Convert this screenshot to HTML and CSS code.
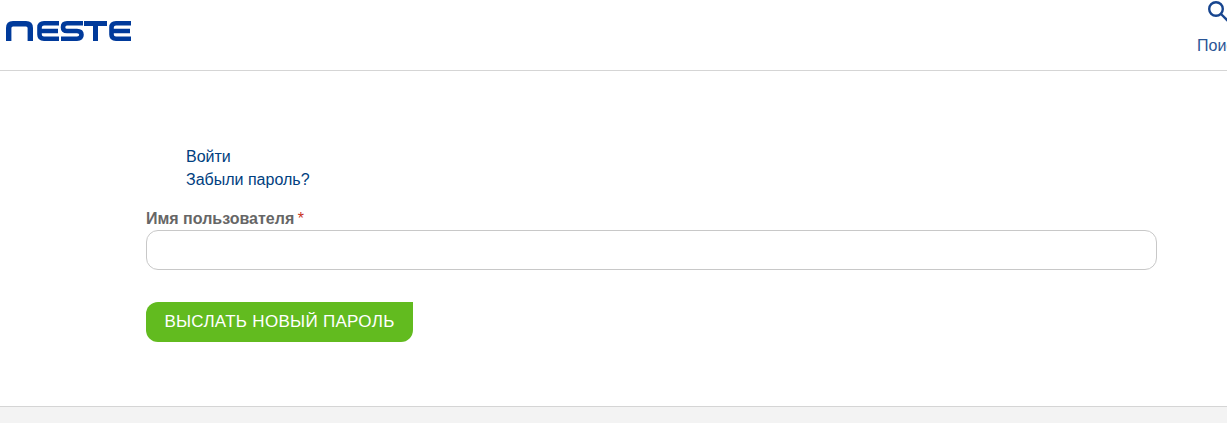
FILE: index.html
```html
<!DOCTYPE html>
<html lang="ru">
<head>
<meta charset="utf-8">
<title>Neste</title>
<link rel="stylesheet" href="styles.css">
</head>
<body>
<header class="site-header">
  <a class="logo" href="#" aria-label="Neste">
    <svg class="logo-svg" width="126" height="20" viewBox="0 0 126 20" fill="none" stroke="#003a9b" stroke-width="4.6">
      <path stroke-width="5.4" d="M2.700 20V7Q2.700 2.700 7 2.700H20Q24.300 2.700 24.300 7V20"/>
      <path d="M53 2.300H38Q33.500 2.300 33.500 6.500V13.500Q33.500 17.700 38 17.700H53M33.500 10H52"/>
      <path d="M77 2.300H61Q57 2.300 57 6.150T61 10H71Q75.500 10 75.500 13.850T71 17.700H55"/>
      <path stroke-width="5" d="M78 2.500H101M89.500 2.500V20"/>
      <path d="M125 2.300H110Q105.500 2.300 105.500 6.500V13.500Q105.500 17.700 110 17.700H125M105.500 10H124"/>
    </svg>
  </a>
  <a class="search" href="#">
    <svg class="search-icon" width="24" height="24" viewBox="0 0 24 24" fill="none" stroke="#17458f" stroke-width="2.400">
      <circle cx="9" cy="9" r="6.800"/>
      <path d="M14 14L21 21"/>
    </svg>
    <span class="search-label">Поиск</span>
  </a>
</header>
<main class="content">
  <ul class="tabs">
    <li><a href="#">Войти</a></li>
    <li><a href="#">Забыли пароль?</a></li>
  </ul>
  <form class="form">
    <label class="field-label" for="name">Имя пользователя <span class="required">*</span></label>
    <input class="field-input" id="name" type="text">
    <button class="submit" type="button">ВЫСЛАТЬ НОВЫЙ ПАРОЛЬ</button>
  </form>
</main>
<footer class="site-footer"></footer>
</body>
</html>
```
FILE: styles.css
```css
* { box-sizing: border-box; }
html, body { margin: 0; padding: 0; height: 100%; overflow: hidden; background: #fff; }
body { font-family: "Liberation Sans", Arial, sans-serif; font-size: 16px; display: flex; flex-direction: column; width: 1227px; height: 423px; }
a { text-decoration: none; }
.site-header { height: 71px; flex: none; border-bottom: 1px solid #d5d5d5; display: flex; justify-content: space-between; padding: 21px 0 0 6px; position: relative; overflow: hidden; }
.logo { display: block; height: 20px; }
.logo-svg { display: block; }
.search { position: absolute; left: 1197px; top: 0; width: 60px; display: block; color: #2a5596; }
.search-icon { display: block; margin: 0 0 0 10px; }
.search-label { display: block; margin-top: 13px; line-height: 18px; font-size: 16px; white-space: nowrap; }
.content { flex: 1; padding: 74px 70px 0 146px; }
.tabs { list-style: none; margin: 0; padding: 0 0 0 40px; line-height: 23px; }
.tabs a { color: #004080; }
.form { margin-top: 18px; }
.field-label { display: block; font-weight: 700; color: #666; line-height: 20px; }
.required { color: #c8321e; font-weight: 400; margin-left: -1px; }
.field-input { display: block; width: 1011px; height: 40px; margin-top: 1px; border: 1px solid #c8c8c8; border-radius: 12px; background: #fff; }
.submit { display: block; margin-top: 32px; width: 267px; height: 40px; border: 0; border-radius: 12px 0 12px 12px; background: #62bb1f; color: #fff; font-family: inherit; font-size: 17px; letter-spacing: .3px; padding: 0; }
.site-footer { height: 17px; flex: none; background: #f3f3f3; border-top: 1px solid #d5d5d5; }
```
